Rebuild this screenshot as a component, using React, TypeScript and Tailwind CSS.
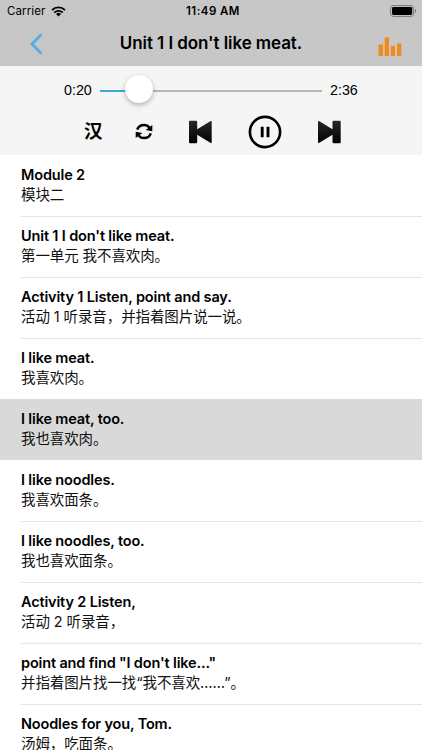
import clsx from "clsx";

const lines = [
  { en: "Module 2", zh: "模块二" },
  { en: "Unit 1 I don't like meat.", zh: "第一单元 我不喜欢肉。" },
  { en: "Activity 1 Listen, point and say.", zh: "活动 1 听录音，并指着图片说一说。" },
  { en: "I like meat.", zh: "我喜欢肉。" },
  { en: "I like meat, too.", zh: "我也喜欢肉。" },
  { en: "I like noodles.", zh: "我喜欢面条。" },
  { en: "I like noodles, too.", zh: "我也喜欢面条。" },
  { en: "Activity 2 Listen,", zh: "活动 2 听录音，" },
  { en: "point and find \"I don't like...\"", zh: "并指着图片找一找“我不喜欢……”。" },
  { en: "Noodles for you, Tom.", zh: "汤姆，吃面条。" },
];

const currentLine = 4;

function StatusBar() {
  return (
    <div className="grid h-[22px] grid-cols-3 items-center pl-[7px] pr-[5px] text-[11.5px] leading-none">
      <div className="flex items-center gap-[6px]">
        <span className="pt-px tracking-[0.1px]">Carrier</span>
        <svg width="15" height="11" viewBox="0 0 15 11" fill="none" stroke="black" strokeWidth="1.9">
          <path d="M1 4.1a9.2 9.2 0 0 1 13 0" />
          <path d="M3.3 6.6a5.9 5.9 0 0 1 8.4 0" />
          <path d="M7.5 10.5 5 8a3.5 3.5 0 0 1 5 0z" fill="black" stroke="none" />
        </svg>
      </div>
      <span className="pl-[2px] pt-px text-center font-semibold tracking-[0.45px] whitespace-nowrap">11:49 AM</span>
      <svg className="justify-self-end" width="27" height="12" viewBox="0 0 27 12">
        <rect x="0.6" y="0.6" width="23" height="10.8" rx="2.6" fill="none" stroke="#777" strokeWidth="1" />
        <rect x="2" y="2" width="20.2" height="8" rx="1.4" fill="black" />
        <path d="M25 4v4c1.5-.5 1.5-3.5 0-4z" fill="#777" />
      </svg>
    </div>
  );
}

function NavBar() {
  return (
    <div className="grid h-11 grid-cols-[1fr_auto_1fr] items-center pl-[30px] pr-[30px]">
      <button className="-mt-px w-[24px]">
        <svg width="13" height="22" viewBox="0 0 13 22" fill="none" stroke="#55aee3" strokeWidth="3">
          <path d="M11.5 1.2 2 11l9.5 9.8" />
        </svg>
      </button>
      <h1 className="text-[17px] font-semibold tracking-[-0.08px] whitespace-nowrap">Unit 1 I don't like meat.</h1>
      <button className="-mr-[10px] mt-[4px] justify-self-end">
        <svg width="24" height="19" viewBox="0 0 24 19" fill="#f18a1c">
          <rect x="0.5" y="7.5" width="4.5" height="11.5" />
          <rect x="6.7" y="0.3" width="4.3" height="18.7" />
          <rect x="12.8" y="9" width="4.2" height="10" />
          <rect x="19" y="6.5" width="4.3" height="12.5" />
        </svg>
      </button>
    </div>
  );
}

function Player() {
  return (
    <div className="h-[89px] bg-[#f5f5f5]">
      <div className="flex h-[49px] items-center pl-[64px] font-['Liberation_Sans',sans-serif] text-[14.3px]">
        <span className="w-[36px]">0:20</span>
        <div className="relative flex h-[2px] w-[222px]">
          <div className="w-[39px] bg-[#35aadc]" />
          <div className="flex-1 bg-[#b7b8b8]" />
          <div className="absolute -top-[15px] left-[25px] size-[28px] rounded-full bg-white shadow-[0_2px_5px_rgba(0,0,0,0.28)]" />
        </div>
        <span className="ml-[8px]">2:36</span>
      </div>
      <div className="flex h-[33px] items-center pl-[84px]">
        <button className="-mt-[2px] w-[51px] text-left font-['Noto_Sans_CJK_SC',sans-serif] text-[18.5px] leading-none font-bold">汉</button>
        <button className="w-[54px]">
          <svg width="18" height="17" viewBox="0 0 18 17" fill="none" stroke="black" strokeWidth="2.5">
            <path d="M2.200 6.600C3.200 3.700 5.800 1.900 9 1.900c2.300 0 4.200 1 5.400 2.700" />
            <path d="M15.800 10.400c-1 2.900-3.600 4.700-6.800 4.700-2.300 0-4.200-1-5.400-2.700" />
            <path d="M17.300 2v6.300l-6.600-1.200z" fill="black" stroke="none" />
            <path d="M.7 15V8.700l6.600 1.200z" fill="black" stroke="none" />
          </svg>
        </button>
        <button className="w-[59px]">
          <svg width="24" height="24" viewBox="0 0 24 24" fill="url(#shade)">
            <defs>
              <linearGradient id="shade" x1="0" y1="0" x2="0" y2="24" gradientUnits="userSpaceOnUse">
                <stop stopColor="#292929" />
                <stop offset="1" stopColor="#000" />
              </linearGradient>
            </defs>
            <path d="M1 .8h6q1.200 0 1.200 1.200v7.200L21.700 1.100q1-.4 1 .7v20.400q0 1.100-1 .7L8.200 14.800V22q0 1.200-1.200 1.200H1q-1 0-1-1V1.800q0-1 1-1z" />
          </svg>
        </button>
        <button className="w-[69px]">
          <svg width="34" height="34" viewBox="0 0 34 34" fill="none" stroke="black">
            <circle cx="17" cy="17" r="15.1" strokeWidth="2.6" />
            <path d="M14.200 11.700v10.600M20 11.700v10.600" strokeWidth="2.900" />
          </svg>
        </button>
        <button>
          <svg width="24" height="24" viewBox="0 0 24 24" fill="url(#shade)">
            <path d="M22.700.8h-6q-1.200 0-1.200 1.200v7.200L2 1.100q-1-.4-1 .7v20.400q0 1.100 1 .7l13.500-8.100V22q0 1.200 1.200 1.200h6q1 0 1-1V1.800q0-1-1-1z" />
          </svg>
        </button>
      </div>
    </div>
  );
}

export default function App() {
  return (
    <div className="h-[750px] w-[422px] overflow-hidden bg-white font-['Inter','Noto_Sans_CJK_SC',sans-serif] text-black">
      <header className="h-[66px] bg-[#c7c7c7]">
        <StatusBar />
        <NavBar />
      </header>
      <Player />
      <ul>
        {lines.map((line, i) => (
          <li key={line.en} className={clsx("h-[61px] pl-[21px]", i === currentLine && "bg-[#d9d9d9]")}>
            <div
              className={clsx(
                "h-[62px] border-b pt-[10px] whitespace-nowrap",
                i === currentLine || i === currentLine - 1 ? "border-transparent" : "border-[#e6e6e6]"
              )}
            >
              <p className="h-5 text-[14.5px] leading-5 font-semibold tracking-[-0.15px]">{line.en}</p>
              <p className="h-5 text-[14.5px] leading-5 tracking-[-0.1px] text-[#111]">{line.zh}</p>
            </div>
          </li>
        ))}
      </ul>
    </div>
  );
}
